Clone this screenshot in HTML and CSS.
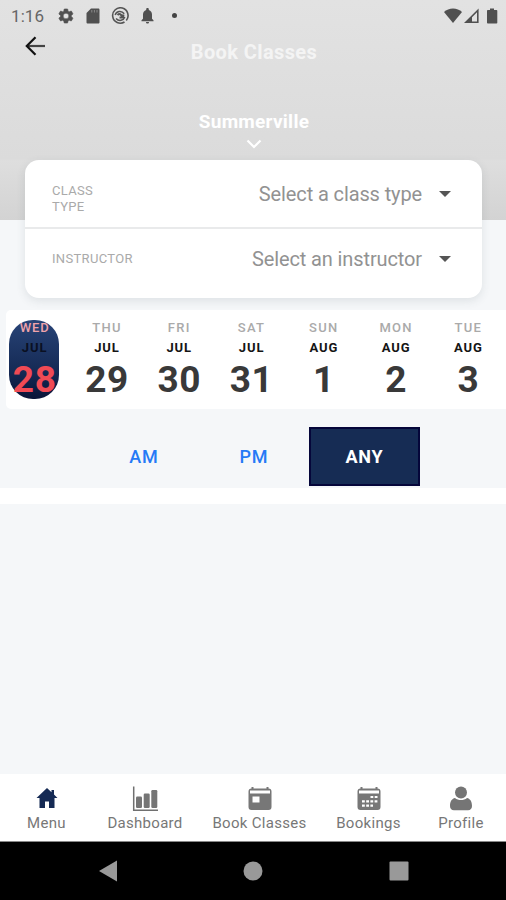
FILE: index.html
```html
<!DOCTYPE html>
<html lang="en">
<head>
<meta charset="utf-8">
<title>Book Classes</title>
<link rel="stylesheet" href="styles.css">
</head>
<body>
<div class="screen">
  <header class="header">
    <div class="status">
      <span class="clock">1:16</span>
      <svg class="ic-gear" width="18" height="18" viewBox="0 0 24 24"><path fill="#505050" stroke="#505050" stroke-width=".8" d="M19.1 12.9c0-.3.1-.6.1-.9s0-.6-.1-.9l2-1.6c.2-.1.2-.4.1-.6l-1.900-3.300c-.1-.2-.4-.3-.6-.2l-2.400 1c-.5-.4-1-.7-1.600-.9l-.4-2.500c0-.3-.2-.4-.5-.4h-3.800c-.2 0-.4.1-.5.400l-.400 2.500c-.6.200-1.100.600-1.600.900l-2.400-1c-.2-.1-.5 0-.6.200l-1.900 3.300c-.1.200-.1.500.1.600l2 1.600c0 .3-.1.600-.1.900s0 .6.100.9l-2 1.600c-.2.100-.2.400-.1.600l1.900 3.300c.1.200.4.300.6.200l2.400-1c.5.400 1 .7 1.600.9l.4 2.500c0 .3.200.4.500.4h3.800c.2 0 .4-.1.500-.4l.4-2.500c.6-.2 1.100-.6 1.600-.9l2.400 1c.2.100.5 0 .6-.2l1.900-3.300c.1-.2.1-.5-.1-.6zM12 15.800a3.800 3.800 0 1 1 0-7.600 3.800 3.800 0 0 1 0 7.600z"/></svg>
      <svg class="ic-sd" width="14" height="16" viewBox="0 0 14 16"><path fill="#505050" d="M5 .5h7.200c.8 0 1.300.5 1.300 1.300v12.400c0 .8-.5 1.300-1.300 1.300H1.800c-.8 0-1.300-.5-1.300-1.300V5z"/><path stroke="#888" stroke-width="1" d="M5.800 2v2.500M8.400 2v2.500M11 2v2.500"/></svg>
      <svg class="ic-at" width="18" height="18" viewBox="0 0 18 18" fill="none" stroke="#555"><path stroke-width="1.600" d="M13.500 15A7.700 7.700 0 1 1 15.300 13.400"/><path stroke-width="1.500" d="M4.200 8C5.200 4 10.500 3 13.200 6.800M13.800 10C12.500 13.700 8 14.700 5 11.500"/><path stroke-width="2" d="M6.500 8c1.800-1.800 3.500-1 5.500 2.500M8.500 10.500l3.500 0 .5-3"/></svg>
      <svg class="ic-bell" width="13" height="16" viewBox="0 0 13 16"><path fill="#505050" d="M6.500 0c.8 0 1.300.5 1.300 1.300v.6c2.100.6 3.200 2.300 3.200 4.600v4.300l1.500 1.500v.9H.5v-.9L2 10.800V6.500c0-2.300 1.100-4 3.200-4.600v-.6C5.200.5 5.700 0 6.500 0zM5 14h3c0 1-.6 1.600-1.500 1.600S5 15 5 14z"/></svg>
      <span class="dot"></span>
      <svg class="ic-signal" width="55" height="16" viewBox="0 0 55 16"><path fill="#505050" d="M0 4C4.500-.700 13.500-.700 18 4L9 15z"/><path fill="#505050" d="M20 15 34.600.500V15zM28 13.500h5V4.200l-5 5z" fill-rule="evenodd"/><path fill="#505050" d="M46 .500h4v1.500h2.500c.500 0 .8.300.8.800V14.700c0 .500-.300.800-.800.800h-8.700c-.500 0-.8-.300-.8-.800V2.800c0-.500.300-.800.800-.800H46z"/></svg>
    </div>
    <div class="titlebar">
      <svg class="back" width="21" height="20" viewBox="0 0 21 20" fill="none" stroke-width="2.200"><path stroke="#444" d="M2 10h18"/><path stroke="#111" d="M10.500 1.200 1.800 10l8.700 8.800"/></svg>
      <h1>Book Classes</h1>
    </div>
    <div class="location">
      <span>Summerville</span>
      <svg width="16" height="10" viewBox="0 0 16 10"><path fill="none" stroke="#fff" stroke-width="2.200" d="M1.500 1.500 8 8l6.500-6.500"/></svg>
    </div>
  </header>

  <section class="filters">
    <div class="filter first"><label>CLASS<br>TYPE</label><span class="value">Select a class type</span><i class="caret"></i></div>
    <div class="filter second"><label>INSTRUCTOR</label><span class="value">Select an instructor</span><i class="caret"></i></div>
  </section>

  <section class="dates">
    <div class="day selected"><span>WED</span><b>JUL</b><strong>28</strong></div>
    <div class="day"><span>THU</span><b>JUL</b><strong>29</strong></div>
    <div class="day"><span>FRI</span><b>JUL</b><strong>30</strong></div>
    <div class="day"><span>SAT</span><b>JUL</b><strong>31</strong></div>
    <div class="day"><span>SUN</span><b>AUG</b><strong>1</strong></div>
    <div class="day"><span>MON</span><b>AUG</b><strong>2</strong></div>
    <div class="day"><span>TUE</span><b>AUG</b><strong>3</strong></div>
  </section>

  <section class="times">
    <button>AM</button><button>PM</button><button class="active">ANY</button>
  </section>
  <div class="band"></div>
  <main class="results"></main>

  <nav class="tabs">
    <div class="tab"><svg width="22" height="26" viewBox="0 0 22 26"><path fill="#152a54" d="M11 2 .500 12H3.500V22H9v-6.500h4V22h5.500V12h3L18 8.500V4h-2.500v2.200z"/></svg><span>Menu</span></div>
    <div class="tab"><svg width="26" height="26" viewBox="0 0 26 26"><path fill="none" stroke="#707070" stroke-width="1.500" d="M1.700.500v23.800H26"/><g fill="#757575"><rect x="4" y="10.500" width="6" height="11.500" rx="1.200"/><rect x="11.700" y="7.500" width="6" height="14.500" rx="1.200"/><rect x="19.300" y="4" width="6" height="18" rx="1.200"/></g></svg><span>Dashboard</span></div>
    <div class="tab"><svg width="26" height="26" viewBox="0 0 26 26"><path fill="#777" fill-rule="evenodd" d="M4.500 1h2v1.500h13V1h2v1.500c2 0 3 1 3 3v15.500c0 2-1 3-3 3h-17c-2 0-3-1-3-3V5.500c0-2 1-3 3-3zM3 4.500v3h20v-3zM5.500 10.500v6h7v-6z"/></svg><span>Book Classes</span></div>
    <div class="tab"><svg width="26" height="26" viewBox="0 0 26 26"><path fill="#777" d="M4.500 1h2v1.500h13V1h2v1.500c2 0 3 1 3 3v15.500c0 2-1 3-3 3h-17c-2 0-3-1-3-3V5.500c0-2 1-3 3-3z"/><path fill="#fff" d="M3 4.500h20v3H3z"/><path fill="none" stroke="#fff" stroke-width="2.200" stroke-dasharray="2.800 1.400" d="M14.500 11h7M6 15.300h15.500M6 19.600h11"/></svg><span>Bookings</span></div>
    <div class="tab"><svg width="24" height="26" viewBox="0 0 24 26"><circle cx="12" cy="6.600" r="6" fill="#757575"/><path fill="#757575" d="M1 20c0-4.500 1.700-7.300 5-8 3.200 2.700 8.800 2.700 12 0 3.300.700 5 3.500 5 8 0 2.700-1.400 4.200-4 4.200H5c-2.600 0-4-1.500-4-4.200z"/></svg><span>Profile</span></div>
  </nav>
  <footer class="system">
    <svg width="18" height="22" viewBox="0 0 18 22"><path fill="#999" d="M0 11 18 .500v21z"/></svg>
    <svg width="20" height="20" viewBox="0 0 20 20"><circle cx="10" cy="10" r="9.500" fill="#999"/></svg>
    <svg width="20" height="20" viewBox="0 0 20 20"><rect x=".5" y=".5" width="19" height="19" rx="1" fill="#999"/></svg>
  </footer>
</div>
</body>
</html>
```
FILE: styles.css
```css
* { box-sizing: border-box; }
body { margin: 0; font-family: Roboto, sans-serif; }
svg { display: block; flex: none; }
.screen { width: 506px; height: 900px; display: flex; flex-direction: column; background: #f5f7f9; overflow: hidden; }
.screen > * { flex: none; }
.header { height: 220px; background: linear-gradient(#e2e2e2 0, #dbdbdb 159px, #dedede 161px, #d3d3d3 220px); }
.status { height: 31px; display: flex; align-items: center; padding: 0 9px 0 11px; }
.clock { width: 46px; font-size: 17px; color: #666; letter-spacing: .1px; }
.ic-sd { margin-left: 11px; }
.ic-at { margin-left: 11px; }
.ic-bell { margin-left: 12px; }
.dot { width: 5px; height: 5px; border-radius: 50%; background: #444; margin-left: 18px; }
.ic-signal { margin-left: auto; margin-right: -2px; }
.titlebar { height: 42px; display: grid; grid-template-columns: 25px 1fr 25px; align-items: center; }
.back { grid-column: 1; margin: -13px 0 0 25px; }
h1 { margin: 0; grid-column: 2; text-align: center; color: #f4f4f4; font-size: 20px; line-height: 24px; font-weight: 700; letter-spacing: .4px; padding-left: 2px; }
.location { padding: 37px 0 0 2px; display: flex; flex-direction: column; align-items: center; gap: 5px; color: #fff; font-size: 19px; line-height: 24px; font-weight: 700; letter-spacing: .25px; }
.filters { position: relative; width: 457px; height: 138px; margin: -60px 0 0 25px; border-radius: 14px; background: #fff; box-shadow: 0 3px 10px rgba(60,70,80,.12); }
.filter { display: flex; align-items: flex-start; padding: 0 31px 0 27px; color: #929292; }
.first { height: 69px; border-bottom: 2px solid #e9eaeb; padding-top: 22px; }
.second { padding-top: 18px; }
.filter label { color: #aaa; font-size: 13px; line-height: 16px; letter-spacing: .33px; padding-top: 1px; }
.second label { padding-top: 4px; }
.value { margin-left: auto; font-size: 20px; line-height: 24px; letter-spacing: -.12px; }
.caret { margin: 9px 0 0 17px; border: 6.500px solid transparent; border-top-color: #555; border-bottom: 0; }
.dates { width: 508px; height: 99px; margin: 12px 0 0 6px; padding-top: 10px; display: grid; grid-template-columns: repeat(7, 72.3px); background: #fff; border-radius: 5px 0 0 5px; }
.day { width: 50px; height: 79px; margin-left: 3px; display: flex; flex-direction: column; align-items: center; color: #393939; white-space: nowrap; }
.day span { font-size: 13px; line-height: 15px; font-weight: 500; color: #aaa; letter-spacing: 1.3px; margin-right: -1.3px; }
.day b { font-size: 13px; line-height: 15px; margin-top: 5px; color: #151515; letter-spacing: .9px; margin-right: -1.3px; }
.day strong { font-size: 37px; line-height: 42px; margin-top: 4px; letter-spacing: .6px; margin-right: -1.4px; }
.selected { border-radius: 24px; background: linear-gradient(#284477, #152a55 65%, #0a1438); }
.selected span { color: #efa3aa; letter-spacing: .9px; }
.selected b { color: #0a1022; }
.selected strong { color: #f04a54; }
.times { height: 79px; display: grid; grid-template-columns: 110px 110px 111px; padding: 18px 0 2px 89px; background: #f5f7f9; }
button { border: 0; background: none; color: #257af6; font: 500 18px/24px Roboto, sans-serif; letter-spacing: .8px; padding: 0; }
button.active { background: #162c54; border: 2px solid #05063a; color: #fff; font-weight: 700; }
.band { height: 16px; background: #fff; }
.results { height: 270px; background: #f5f7f9; }
.tabs { height: 68px; border-bottom: 1px solid #888; background: #fff; display: grid; grid-template-columns: 92px 105px 124px 94px 91px; padding-top: 12px; }
.tab { display: flex; flex-direction: column; align-items: center; gap: 2px; color: #777; font-size: 15px; line-height: 18px; letter-spacing: .3px; padding-left: 1px; white-space: nowrap; }
.system { height: 58px; background: #000; display: flex; justify-content: center; align-items: center; gap: 126px; }
.system { padding-left: 0; }
.system svg { margin-right: -2px; }
.system svg + svg { margin-left: 2px; }
```
